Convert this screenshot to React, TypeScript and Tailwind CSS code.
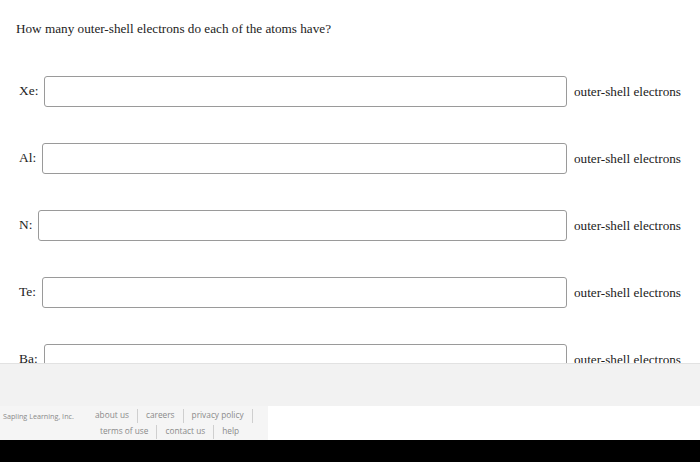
import * as React from 'react'

const atoms = ['Xe', 'Al', 'N', 'Te', 'Ba']

function AtomRow({ symbol }: { symbol: string }) {
  return (
    <div className="flex h-[31px] items-center pl-[19px] pr-[19px]">
      <span className="mr-[6px] text-[13.4px] text-[#222]">{symbol}:</span>
      <div className="h-[31px] flex-1 rounded-[3px] border border-[#9a9a9a] bg-white" />
      <span className="ml-[7px] text-[13.2px] text-[#222]">outer-shell electrons</span>
    </div>
  )
}

function Sep() {
  return <span className="mx-[8px] inline-block h-[14px] w-px bg-[#cfcfcf] align-middle" />
}

export default function App() {
  return (
    <div className="flex h-[462px] w-[700px] flex-col overflow-hidden bg-white">
      <main
        className="h-[363px] shrink-0 overflow-hidden"
        style={{ fontFamily: '"Liberation Serif", "Times New Roman", serif' }}
      >
        <p className="pl-[16px] pt-[20px] text-[13.2px] leading-[18px] text-[#222]">
          How many outer-shell electrons do each of the atoms have?
        </p>
        <div className="mt-[38px] flex flex-col gap-[36px]">
          {atoms.map((a) => (
            <AtomRow key={a} symbol={a} />
          ))}
        </div>
      </main>

      <div className="h-[43px] shrink-0 border-t border-[#e2e2e2] bg-[#f2f2f2]" />

      <footer
        className="flex h-[34px] shrink-0 bg-white text-[8.3px] text-[#8a8a8a]"
        style={{ fontFamily: '"Open Sans", "Noto Sans", sans-serif' }}
      >
        <div className="flex w-[268px] bg-[#f5f5f5]">
          <div className="w-[95px] shrink-0 whitespace-nowrap pl-[3px] pt-[2px] text-[7.2px] leading-[16px]">
            Sapling Learning, Inc.
          </div>
          <div className="flex flex-1 flex-col items-start whitespace-nowrap pt-[1px] leading-[16px]">
            <div>
              about us<Sep />careers<Sep />privacy policy<Sep />
            </div>
            <div className="ml-[5px]">
              terms of use<Sep />contact us<Sep />help
            </div>
          </div>
        </div>
      </footer>

      <div className="flex-1 bg-black" />
    </div>
  )
}
